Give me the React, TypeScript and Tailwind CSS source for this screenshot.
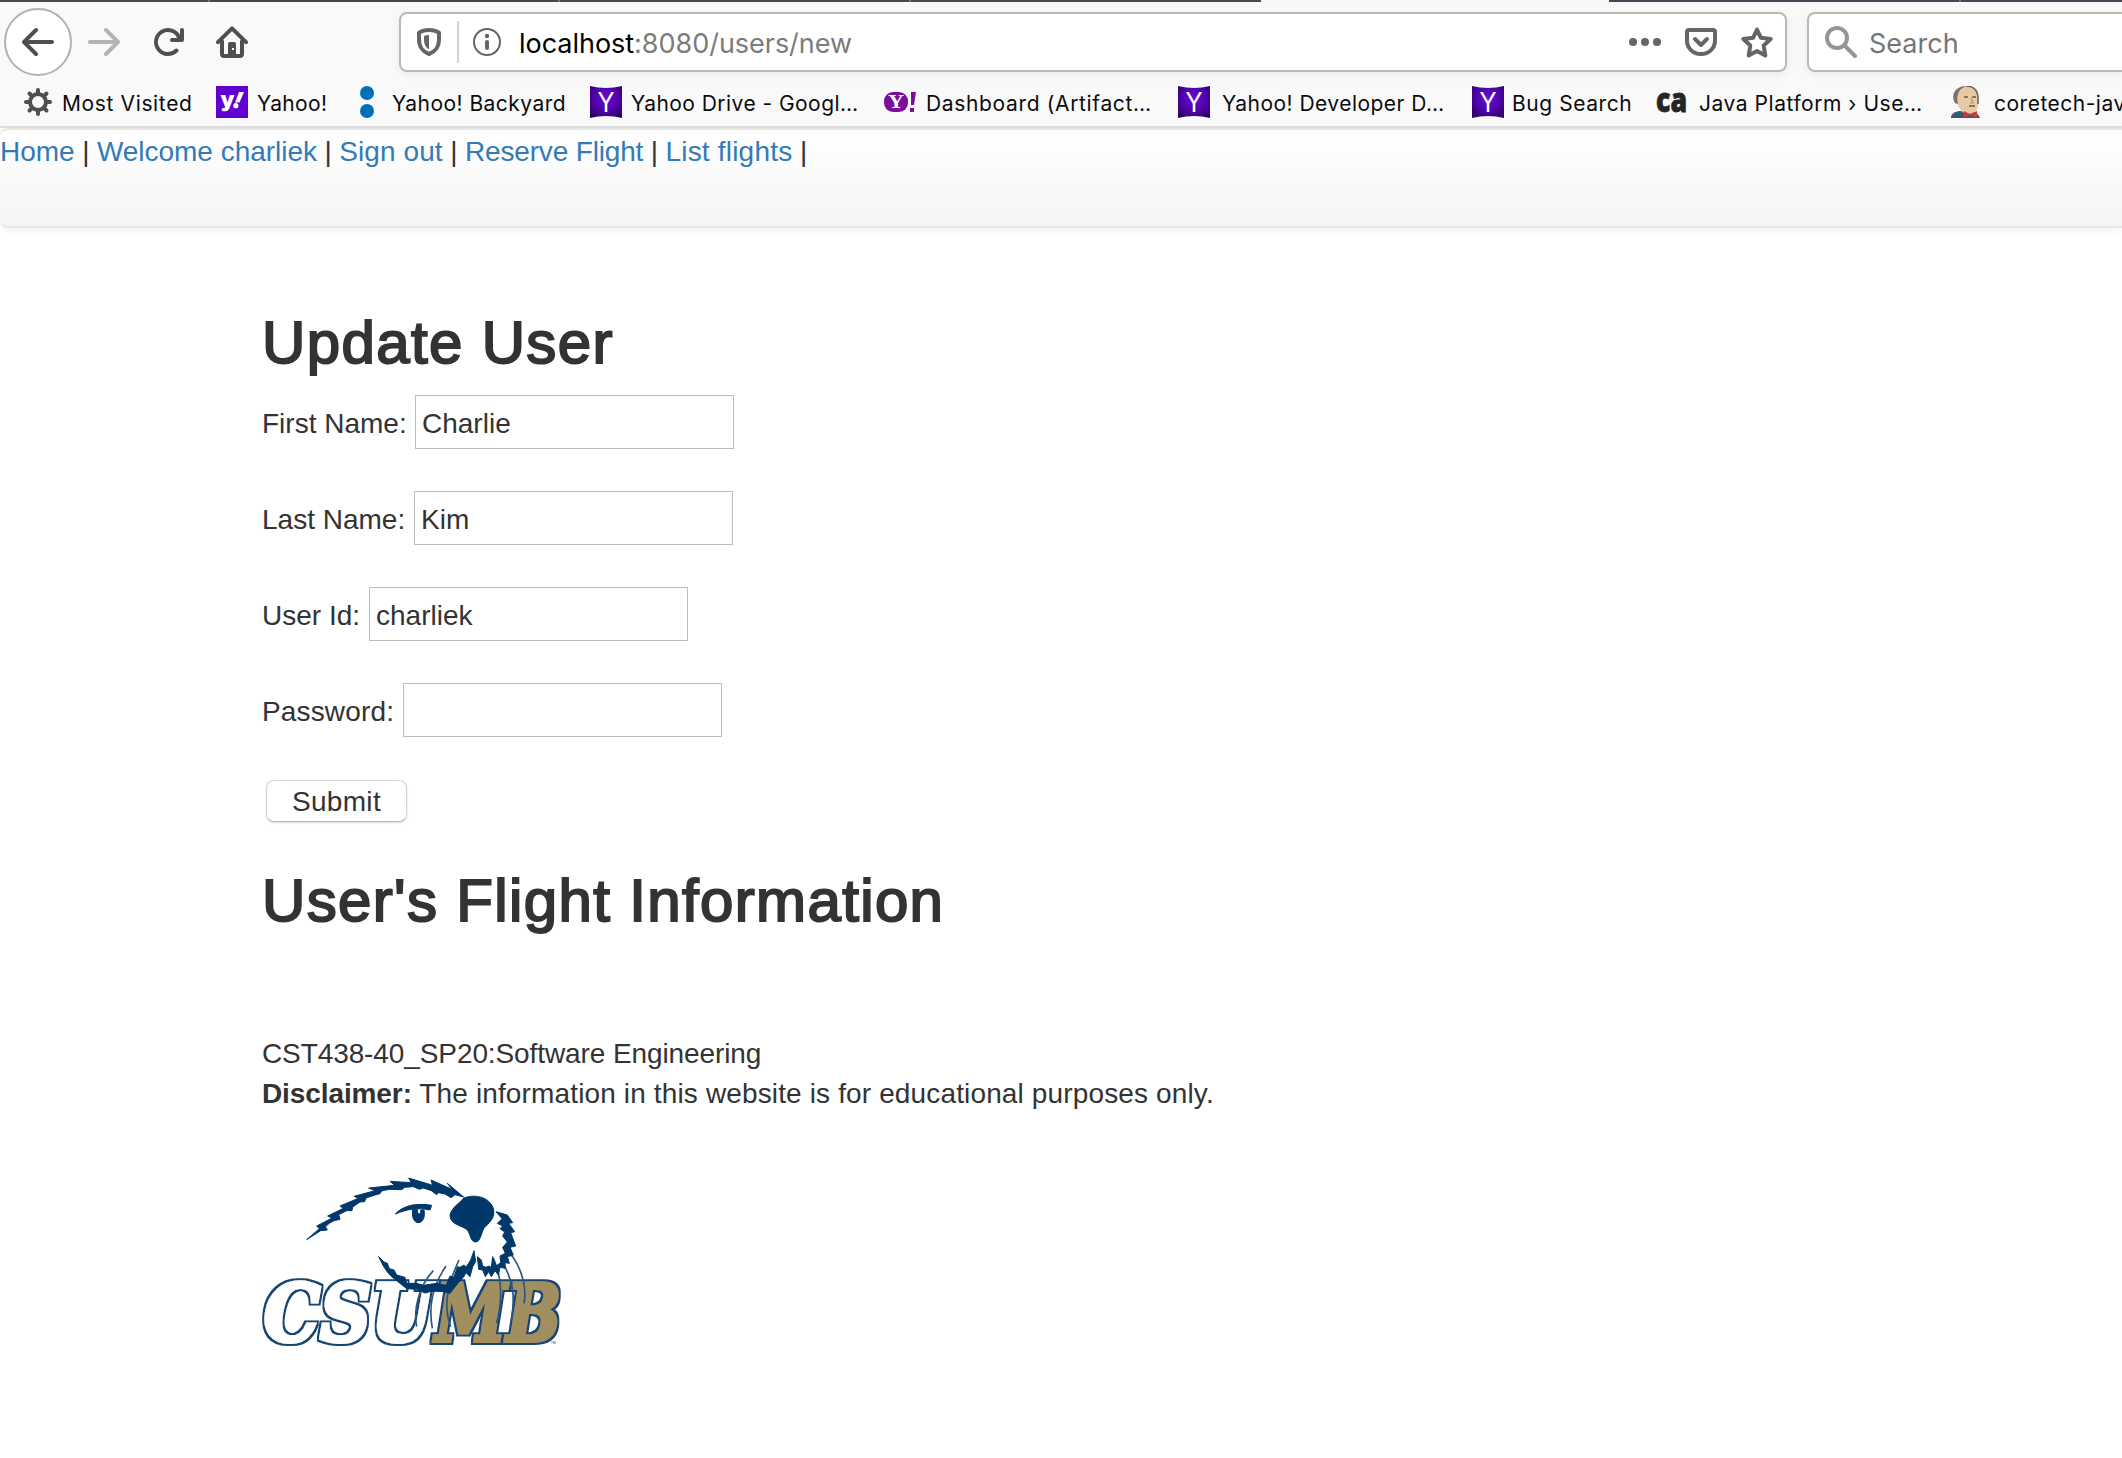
import type { ReactNode } from "react";

const GREY = "#4f4f50";

function BackIcon({ flipped = false, color = GREY }: { flipped?: boolean; color?: string }) {
  return (
    <svg viewBox="0 0 16 16" className={flipped ? "h-8 w-8 shrink-0 -scale-x-100" : "h-8 w-8 shrink-0"} fill={color}>
      <path d="M15 7H3.414l4.293-4.293a1 1 0 0 0-1.414-1.414l-6 6a1 1 0 0 0 0 1.414l6 6a1 1 0 0 0 1.414-1.414L3.414 9H15a1 1 0 0 0 0-2z" />
    </svg>
  );
}

function ReloadIcon() {
  return (
    <svg viewBox="0 0 16 16" className="h-8 w-8 shrink-0" fill={GREY}>
      <path d="M15 1a1 1 0 0 0-1 1v2.418A6.995 6.995 0 1 0 8 15a6.954 6.954 0 0 0 4.95-2.05 1 1 0 0 0-1.414-1.414A5.019 5.019 0 1 1 12.549 6H10a1 1 0 0 0 0 2h5a1 1 0 0 0 1-1V2a1 1 0 0 0-1-1z" />
    </svg>
  );
}

function HomeIcon() {
  return (
    <svg viewBox="0 0 16 16" className="h-8 w-8 shrink-0" fill="none" stroke={GREY} strokeWidth="2" strokeLinecap="round" strokeLinejoin="round">
      <path d="M1 8.1 8 1.2l7 6.9" />
      <path d="M3 7.6V14a1 1 0 0 0 1 1h8a1 1 0 0 0 1-1V7.6" />
      <path d="M6 15V8.9a.9.9 0 0 1 .9-.9h2.2a.9.9 0 0 1 .9.9V15z" fill={GREY} stroke="none" />
      <rect x="8" y="11" width="1" height="1" fill="#f9f9fa" stroke="none" />
    </svg>
  );
}

function ShieldIcon() {
  return (
    <svg viewBox="0 0 24 28" className="h-7 w-6 shrink-0">
      <path d="M2 4.600C5 2.700 8.500 2 12 2s7 .7 10 2.600v6.900C22 18.500 18 24 12 26 6 24 2 18.500 2 11.500z" fill="none" stroke="#656566" strokeWidth="4" strokeLinejoin="round" />
      <path d="M12 7v14.500C8.500 19.500 7 16 7 12V7.900C8.600 7.200 10.300 7 12 7z" fill="#656566" />
    </svg>
  );
}

function InfoIcon() {
  return (
    <svg viewBox="0 0 28 28" className="h-7 w-7 shrink-0">
      <circle cx="14" cy="14" r="13" fill="none" stroke="#656566" strokeWidth="2" />
      <circle cx="14" cy="8" r="2.200" fill="#656566" />
      <rect x="12" y="12" width="4" height="10" rx="2" fill="#656566" />
    </svg>
  );
}

function DotsIcon() {
  return (
    <svg viewBox="0 0 32 32" className="h-8 w-8 shrink-0" fill="#656566">
      <circle cx="4" cy="16" r="4" />
      <circle cx="16" cy="16" r="4" />
      <circle cx="28" cy="16" r="4" />
    </svg>
  );
}

function PocketIcon() {
  return (
    <svg viewBox="0 0 32 32" className="h-8 w-8 shrink-0" fill="none" stroke="#656566" strokeLinecap="round" strokeLinejoin="round">
      <path d="M4 4h24a2 2 0 0 1 2 2v8.500C30 22 24 28 16 28S2 22 2 14.500V6a2 2 0 0 1 2-2z" strokeWidth="4" />
      <path d="m10 13 6 6 6-6" strokeWidth="4" />
    </svg>
  );
}

function StarIcon() {
  return (
    <svg viewBox="0 0 32 32" className="h-8 w-8 shrink-0" fill="none" stroke="#656566" strokeWidth="4" strokeLinejoin="round">
      <path d="m16 3.500 3.900 8.300 9.800 1.200-7 6.500 1.600 10L16 25l-8.300 4.500 1.600-10-7-6.500 9.800-1.200z" />
    </svg>
  );
}

function SearchIcon() {
  return (
    <svg viewBox="0 0 32 32" className="h-8 w-8 shrink-0" fill="none" stroke="#959596" strokeWidth="4" strokeLinecap="round">
      <circle cx="12" cy="12" r="10" />
      <path d="m19.500 19.500 10.500 10.500" />
    </svg>
  );
}

function GearIcon() {
  return (
    <svg viewBox="-16 -16 32 32" className="h-8 w-8 shrink-0" stroke={GREY} strokeWidth="4" strokeLinecap="round" fill="none">
      <circle r="8" />
      {[0, 45, 90, 135, 180, 225, 270, 315].map((a) => (
        <path key={a} d="M0 -9V-12" transform={`rotate(${a})`} />
      ))}
    </svg>
  );
}

function YahooIcon() {
  return (
    <svg viewBox="0 0 32 32" className="h-8 w-8 shrink-0 overflow-visible">
      <rect width="32" height="32" fill="#6001d2" />
      <text x="4.500" y="21" fontFamily="Inter, sans-serif" fontWeight="900" fontSize="22" fill="#fff" textLength="14" lengthAdjust="spacingAndGlyphs">y</text>
      <path d="M23 6h5l-4.500 10.500h-4.400z" fill="#fff" />
      <circle cx="19.800" cy="19.700" r="2.600" fill="#fff" />
    </svg>
  );
}

function BackyardIcon() {
  return (
    <svg viewBox="0 0 32 32" className="h-8 w-8 shrink-0" fill="#006fba">
      <circle cx="15" cy="7" r="7" />
      <circle cx="15" cy="25" r="7" />
    </svg>
  );
}

function YIcon() {
  return (
    <svg viewBox="0 0 32 32" className="h-8 w-8 shrink-0 overflow-visible">
      <defs>
        <radialGradient id="y-fill" cx="50%" cy="40%" r="70%">
          <stop offset="0" stopColor="#6a08dc" />
          <stop offset="0.550" stopColor="#4f04a8" />
          <stop offset="1" stopColor="#2c0064" />
        </radialGradient>
      </defs>
      <path d="M0 0Q16 4 32 0V32Q16 28 0 32z" fill="url(#y-fill)" />
      <text x="7.500" y="26" fontFamily="'Liberation Sans', sans-serif" fontSize="30" fill="#fff" textLength="17" lengthAdjust="spacingAndGlyphs">Y</text>
    </svg>
  );
}

function YBangIcon() {
  return (
    <svg viewBox="0 0 32 32" className="h-8 w-8 shrink-0 overflow-visible">
      <rect y="6" width="24" height="20" rx="9" fill="#7b0f9c" />
      <text x="4" y="22" fontFamily="'Liberation Serif', serif" fontWeight="700" fontSize="18" fill="#fff" textLength="16" lengthAdjust="spacingAndGlyphs">Y</text>
      <path d="M27 6h5l-2 13h-3z" fill="#7b0f9c" />
      <rect x="26" y="22" width="4" height="4" fill="#7b0f9c" />
    </svg>
  );
}

function CaIcon() {
  return (
    <svg viewBox="0 0 32 32" className="h-8 w-8 shrink-0 overflow-visible">
      <text x="0" y="25.500" fontFamily="'Open Sans', sans-serif" fontWeight="800" fontSize="34" fill="#252525" stroke="#252525" strokeWidth="0.800" textLength="31" lengthAdjust="spacingAndGlyphs">ca</text>
    </svg>
  );
}

function ButlerIcon() {
  return (
    <svg viewBox="0 0 32 32" className="h-8 w-8 shrink-0">
      <path d="M1 32c0-4 3-6 8-7l14 1c4 1 6 3 7 6z" fill="#39596d" />
      <path d="M4 8C6 2 11 0 16 0c8 0 12 5 12 11v9c0 4-4 8-9 8-6 0-9-4-11-9C4 17 3 12 4 8z" fill="#e8c9a4" />
      <path d="M5 17C2 12 3 6 7 3c3-2 5-3 9-3-4 2-7 4-8 8s-1 6 0 10z" fill="#77736f" />
      <path d="M16 0c7 0 11 4 12 10v8" fill="none" stroke="#68605a" strokeWidth="1.500" />
      <path d="M14 11h4M22 11h4M19 20h6" stroke="#6b5545" strokeWidth="1.500" />
      <path d="M21 12l2 5h-3" fill="none" stroke="#b9906c" strokeWidth="1.200" />
      <path d="m14 25 6 3 7-3v7l-7-3-6 3z" fill="#cf3a34" />
    </svg>
  );
}

const bookmarks: { icon: ReactNode; label: string; box: string; text: string }[] = [
  { icon: <GearIcon />, label: "Most Visited", box: "w-[194px]", text: "tracking-[0.63px]" },
  { icon: <YahooIcon />, label: "Yahoo!", box: "w-[136px]", text: "pl-[1px] tracking-[0.37px]" },
  { icon: <BackyardIcon />, label: "Yahoo! Backyard", box: "w-[238px]", text: "tracking-[0.47px]" },
  { icon: <YIcon />, label: "Yahoo Drive - Googl…", box: "w-[294px]", text: "pl-[1px] tracking-[0.45px]" },
  { icon: <YBangIcon />, label: "Dashboard (Artifact…", box: "w-[294px]", text: "pl-[2px] tracking-[0.65px]" },
  { icon: <YIcon />, label: "Yahoo! Developer D…", box: "w-[294px]", text: "pl-[4px] tracking-[0.47px]" },
  { icon: <YIcon />, label: "Bug Search", box: "w-[184px]", text: "tracking-[0.56px]" },
  { icon: <CaIcon />, label: "Java Platform › Use…", box: "w-[294px]", text: "pl-[3px] tracking-[0.54px]" },
  { icon: <ButlerIcon />, label: "coretech-java", box: "w-[294px]", text: "pl-[4px] tracking-[0.5px]" },
];

function TabStrip() {
  return (
    <div className="flex h-[2px] bg-[#f9f9fa]">
      <div className="w-[208px] bg-[#4b4650]" />
      <div className="w-[2px] bg-[#77737c]" />
      <div className="w-[348px] bg-[#49454c]" />
      <div className="w-[2px] bg-[#77737c]" />
      <div className="w-[349px] bg-[#50434a]" />
      <div className="w-[2px] bg-[#77737c]" />
      <div className="w-[350px] bg-[#4b4653]" />
      <div className="w-[348px]" />
      <div className="w-[350px] bg-[#4a4554]" />
      <div className="w-[2px] bg-[#77737c]" />
      <div className="flex-1 bg-[#4a4554]" />
    </div>
  );
}

function Toolbar() {
  return (
    <div className="flex h-20 items-center pl-1 font-[Inter,sans-serif] text-[27px]">
      <div className="flex h-[68px] w-[68px] shrink-0 items-center justify-center rounded-full border-2 border-[#b1b1b1] bg-white">
        <BackIcon />
      </div>
      <div className="ml-4 flex gap-8">
        <BackIcon flipped color="#b4b4b4" />
        <ReloadIcon />
        <HomeIcon />
      </div>
      <div className="ml-[151px] flex h-[60px] w-[1388px] shrink-0 items-center rounded-lg border-2 border-[#b9b9ba] bg-white pl-4 shadow-[0_2px_8px_rgba(0,0,0,0.07)]">
        <ShieldIcon />
        <div className="ml-4 h-[42px] w-[2px] bg-[#d2d2d2]" />
        <div className="ml-[14px] flex">
          <InfoIcon />
        </div>
        <div className="ml-[18px] pt-[4px] tracking-[-0.03px] whitespace-nowrap text-[#7b7b7b]">
          <span className="text-black">localhost</span>:8080/users/new
        </div>
        <div className="ml-auto flex gap-6 pr-3">
          <DotsIcon />
          <PocketIcon />
          <StarIcon />
        </div>
      </div>
      <div className="ml-5 flex h-[60px] flex-1 items-center rounded-l-lg border-2 border-r-0 border-[#b9b9ba] bg-white pl-4 shadow-[0_2px_8px_rgba(0,0,0,0.07)]">
        <SearchIcon />
        <span className="ml-[12px] pt-[4px] text-[#757575]">Search</span>
      </div>
    </div>
  );
}

function BookmarksBar() {
  return (
    <div className="flex h-[46px] items-start border-b-2 border-[#e0e0e1] pt-1 pl-[22px] font-[Inter,sans-serif] text-[21px] leading-8 text-[#0c0c0d]">
      {bookmarks.map((b, i) => (
        <div key={i} className={`flex h-8 shrink-0 items-center gap-2 ${b.box}`}>
          {b.icon}
          <span className={`pt-[4px] whitespace-nowrap ${b.text}`}>{b.label}</span>
        </div>
      ))}
    </div>
  );
}

function SiteNav() {
  return (
    <nav className="h-[100px] rounded-l-lg border-2 border-r-0 border-l-0 border-[#e6e6e6] bg-linear-to-b from-white to-[#f5f5f5] pt-[2px] tracking-[-0.2px] whitespace-pre shadow-[0_2px_10px_rgba(0,0,0,0.06)]">
      <span className="tracking-normal text-[#337ab7]">Home</span>
      {" | "}
      <span className="tracking-[-0.03px] text-[#337ab7]">Welcome charliek</span>
      {" | "}
      <span className="tracking-[0.1px] text-[#337ab7]">Sign out</span>
      {" | "}
      <span className="tracking-[-0.16px] text-[#337ab7]">Reserve Flight</span>
      {" | "}
      <span className="tracking-[0.2px] text-[#337ab7]">List flights</span>
      {" |"}
    </nav>
  );
}

const fields = [
  { label: "First Name:", value: "Charlie", type: "text", width: "w-[153px]" },
  { label: "Last Name:", value: "Kim", type: "text", width: "w-[152px]" },
  { label: "User Id:", value: "charliek", type: "text", width: "w-[107px]" },
  { label: "Password:", value: "", type: "password", width: "w-[141px] tracking-[0.15px]" },
];

function Heading({ children }: { children: ReactNode }) {
  return (
    <h2 className="text-[60px] leading-[66px] tracking-[1.36px] whitespace-nowrap [-webkit-text-stroke:2px_#333]">{children}</h2>
  );
}

const lettering = {
  fontFamily: "'DejaVu Serif', serif",
  fontWeight: 700,
  fontStyle: "italic",
  fontSize: 236,
  y: 542,
  strokeWidth: 12,
  lengthAdjust: "spacingAndGlyphs" as const,
};

function OtterLogo() {
  return (
    <svg viewBox="0 0 990 600" className="-ml-3 h-[200px] w-[330px] overflow-visible" role="img" aria-label="CSUMB">
      <defs>
        <filter id="soft" x="-5%" y="-5%" width="110%" height="110%">
          <feGaussianBlur stdDeviation="2.200" />
        </filter>
        <filter id="outline" x="-5%" y="-5%" width="110%" height="110%">
          <feMorphology in="SourceAlpha" operator="dilate" radius="7" result="grown" />
          <feFlood floodColor="#174673" />
          <feComposite in2="grown" operator="in" />
          <feComposite in="SourceGraphic" operator="over" />
        </filter>
      </defs>
      <g filter="url(#soft)">
        <g filter="url(#outline)">
          <text {...lettering} x="41" textLength="508" fill="#fff" stroke="#fff">CSU</text>
        </g>
        <g filter="url(#outline)">
          <text {...lettering} x="556" textLength="377" fill="#a18f5f" stroke="#a18f5f">MB</text>
        </g>
        <g fill="none" stroke="#2c5680" strokeWidth="5">
          <path d="M550 332C505 380 490 450 500 500" />
          <path d="M588 318C545 380 535 440 547 505" />
          <path d="M627 300C590 380 580 440 602 500" />
          <path d="M730 295C760 360 755 430 740 490" />
          <path d="M760 310C790 370 795 400 785 480" />
          <path d="M780 280C820 330 830 390 822 430" />
        </g>
        <g fill="#04386a" stroke="#04386a" strokeWidth="3" strokeLinejoin="round">
          <path d="M170 239 208 206 200 198 212 192 246 174 233 168 280 145 270 138 325 115 312 109 375 92 356 84 434 76 420 64 484 68 476 54 548 76 543 60 606 88 592 70 641 111 615 104 603 113 585 102 566 98 560 104 544 92 520 84 508 88 490 80 464 82 455 89 420 88 396 92 390 101 378 104 348 114 344 125 330 126 308 141 306 152 290 152 266 164 270 178 252 182 238 190 226 200 232 210 212 212Z" />
          <path d="M600 165C606 140 630 130 640 115 665 103 715 105 730 145 738 175 715 190 702 205 692 222 692 245 677 246 660 245 662 222 652 210 635 195 600 195 600 165Z" />
          <path d="M436 162C460 136 500 128 545 136L540 150C500 142 470 148 436 162Z" />
          <path d="M488 148C484 175 494 188 505 188 520 187 526 170 522 150L512 150C514 164 502 168 502 148Z" />
          <path d="M738 155 772 165 788 188 776 190 794 215 782 218 797 258 780 262 790 285 772 290 778 310 765 308 766 325 750 322 745 345 735 332 724 350 716 335 706 350 698 330 686 328 682 290 694 300 698 318 708 322 716 318 724 322 728 290 738 318 752 308 750 288 766 280 758 262 772 246 758 228 764 216 750 206 758 198 742 190 756 176Z" />
          <path d="M386 290 402 306 412 310 418 326 432 330 440 345 465 352 470 370 500 370 520 376 560 370 588 376 600 348 612 352 622 320 630 322 642 315 648 322 662 300 672 272 677 305 668 320 660 350 648 338 640 352 625 368 600 400 560 390 525 399 500 388 470 386 440 362 425 350 412 336 400 318Z" />
        </g>
        <text x="903" y="552" fontFamily="'Liberation Sans', sans-serif" fontSize="10" fill="#1d4a78">TM</text>
      </g>
    </svg>
  );
}

export default function App() {
  return (
    <div className="h-[1458px] overflow-hidden bg-white">
      <header className="bg-[#f9f9fa]">
        <TabStrip />
        <Toolbar />
        <BookmarksBar />
      </header>
      <div className="font-['Liberation_Sans',sans-serif] text-[28px] leading-10 text-[#333]">
        <SiteNav />
        <main className="pt-[82px] pl-[262px]">
          <Heading>Update User</Heading>
          <form className="mt-[19px]" onSubmit={(e) => e.preventDefault()}>
            {fields.map((f) => (
              <div key={f.label} className="mb-[42px] flex h-[54px] items-center">
                <label className={`shrink-0 pt-[3px] ${f.width}`}>{f.label}</label>
                <input type={f.type} defaultValue={f.value} className="h-[54px] w-[319px] border border-[#bdbdbd] bg-white pt-[4px] pl-[6px] outline-none" />
              </div>
            ))}
            <button className="mt-[43px] ml-1 flex h-[42px] w-[141px] items-center justify-center rounded-lg border border-[#d4d4d4] border-b-[#b8b8b8] bg-white pt-[1px] tracking-[0.3px] shadow-[0_1px_2px_rgba(0,0,0,0.15)]">
              Submit
            </button>
          </form>
          <div className="mt-[46px]">
            <Heading>User's Flight Information</Heading>
          </div>
          <footer className="mt-[100px]">
            <p className="tracking-[-0.1px]">CST438-40_SP20:Software Engineering</p>
            <p className="tracking-[0.14px]">
              <b className="tracking-[-0.1px]">Disclaimer:</b> The information in this website is for educational purposes only.
            </p>
            <div className="mt-[46px]">
              <OtterLogo />
            </div>
          </footer>
        </main>
      </div>
    </div>
  );
}
